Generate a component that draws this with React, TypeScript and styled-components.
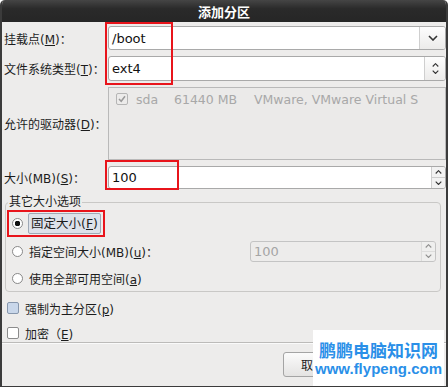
import * as React from 'react';
import styled, { createGlobalStyle } from 'styled-components';

const GlobalStyle = createGlobalStyle`
    html, body {
        margin: 0;
        padding: 0;
        background: #fff;
    }
    body {
        font-family: "DejaVu Sans", "Noto Sans CJK SC", sans-serif;
        font-size: 12px;
        color: #1c1c1c;
    }
`;

const Window = styled.div`
    position: relative;
    width: 448px;
    height: 387px;
    box-sizing: border-box;
    display: flex;
    flex-direction: column;
    background: #edeceb;
    border: 2px solid #3b3b3b;
    border-top: none;
    border-bottom-width: 1px;
    border-radius: 5px 5px 0 0;
    overflow: hidden;
`;

const TitleBar = styled.div`
    height: 22px;
    flex: none;
    display: flex;
    align-items: center;
    justify-content: center;
    background: linear-gradient(#454545, #2a2a2a 40%, #262626);
    color: #fff;
    font-weight: bold;
    font-size: 13px;
`;

const Form = styled.div`
    display: grid;
    grid-template-columns: 104px 1fr;
    grid-template-rows: 24px 25px 73px 23px;
    row-gap: 6px;
    padding: 4px 0 0 2px;
    align-items: center;
`;

const Label = styled.div`
    white-space: nowrap;
    align-self: center;
`;

const Field = styled.div<{ $disabled?: boolean }>`
    display: flex;
    align-items: stretch;
    box-sizing: border-box;
    height: 100%;
    background: ${p => (p.$disabled ? '#edeceb' : '#fff')};
    border: 1px solid ${p => (p.$disabled ? '#c4c4c4' : '#a9a9a9')};
    border-radius: 3px;
    overflow: hidden;
`;

const FieldText = styled.div<{ $disabled?: boolean }>`
    flex: 1;
    display: flex;
    align-items: center;
    padding-left: 3px;
    font-size: 13px;
    color: ${p => (p.$disabled ? '#a5a5a5' : '#111')};
`;

const ComboButton = styled.div<{ $w: number }>`
    width: ${p => p.$w}px;
    flex: none;
    display: flex;
    flex-direction: column;
    gap: 3px;
    align-items: center;
    justify-content: center;
    border-left: 1px solid #cfcfcf;
    background: linear-gradient(#fdfdfd, #ecebea);
`;

const SpinButtons = styled.div<{ $disabled?: boolean }>`
    width: 13px;
    flex: none;
    display: flex;
    flex-direction: column;
    border-left: 1px solid #cdcdcd;
    background: #f2f2f2;
    opacity: ${p => (p.$disabled ? 0.5 : 1)};
`;

const SpinHalf = styled.div`
    flex: 1;
    display: flex;
    align-items: center;
    justify-content: center;
    & + & {
        border-top: 1px solid #cdcdcd;
    }
`;

const DriveList = styled.div`
    height: 100%;
    box-sizing: border-box;
    background: #ebeae9;
    border: 1px solid #b9b9b9;
    padding: 5px 0 0 7px;
    color: #a8a8a8;
    font-size: 12.5px;
`;

const DriveRow = styled.div`
    display: flex;
    align-items: center;
    height: 12px;
`;

const DriveCell = styled.span<{ $w?: number }>`
    width: ${p => (p.$w ? `${p.$w}px` : 'auto')};
    flex: none;
    white-space: nowrap;
`;

const Check = styled.span<{ $fill?: string; $border?: string }>`
    display: inline-flex;
    align-items: center;
    justify-content: center;
    width: 10px;
    height: 10px;
    flex: none;
    border: 1px solid ${p => p.$border || '#8c8c8c'};
    border-radius: 2px;
    background: ${p => p.$fill || '#fff'};
`;

const Frame = styled.fieldset`
    margin: 6px 5px 0 3px;
    padding: 1px 4px 2px 0;
    border: 1px solid #c9c8c6;
    border-radius: 4px;
    display: flex;
    flex-direction: column;
    gap: 5px;
`;

const Legend = styled.legend`
    padding: 0 1px;
    margin-left: 2px;
    line-height: 15px;
`;

const OptionRow = styled.div<{ $h: number }>`
    height: ${p => p.$h}px;
    display: flex;
    align-items: center;
    white-space: nowrap;
`;

const Radio = styled.span<{ $on?: boolean }>`
    width: 11px;
    height: 11px;
    box-sizing: border-box;
    flex: none;
    border-radius: 50%;
    border: 1px solid #8a8a8a;
    background: radial-gradient(circle, ${p => (p.$on ? '#111 0 2.6px, #fff 3px' : '#fff 0, #fff 100%')});
    margin: 0 6px 0 6px;
`;

const FocusLabel = styled.span`
    padding: 3px 2px;
    margin-left: -1px;
    background: #dde2ea;
    border: 1px solid #9fa9b6;
    border-radius: 2px;
    line-height: 13px;
    font-size: 12.5px;
`;

const InlineSpin = styled.div`
    margin-left: auto;
    width: 186px;
    height: 21px;
`;

const CheckRow = styled.div<{ $mt: number }>`
    height: 14px;
    margin: ${p => p.$mt}px 0 0 5px;
    display: flex;
    align-items: center;
    gap: 6px;
    white-space: nowrap;
`;

const Separator = styled.div`
    height: 1px;
    margin: 2px 0 0 0;
    background: #bcbbb9;
    border-bottom: 1px solid #fafafa;
`;

const ButtonBar = styled.div`
    display: flex;
    padding: 8px 0 0 281px;
`;

const Button = styled.div`
    width: 60px;
    height: 25px;
    box-sizing: border-box;
    display: flex;
    align-items: center;
    justify-content: center;
    border: 1px solid #a4a4a4;
    border-radius: 3px;
    background: linear-gradient(#fbfbfb, #e4e3e2);
`;

const Mark = styled.div<{ $x: number; $y: number; $w: number; $h: number }>`
    position: absolute;
    left: ${p => p.$x}px;
    top: ${p => p.$y}px;
    width: ${p => p.$w}px;
    height: ${p => p.$h}px;
    box-sizing: border-box;
    border: 2px solid #e8141b;
    pointer-events: none;
`;

const Watermark = styled.div`
    position: absolute;
    left: 311px;
    top: 330px;
    width: 131px;
    height: 57px;
    background: #fff;
    display: flex;
    flex-direction: column;
    align-items: center;
    justify-content: center;
    color: #2a8fe8;
`;

const WatermarkTitle = styled.div`
    font-family: "Noto Sans CJK SC", sans-serif;
    font-size: 17px;
    font-weight: bold;
    line-height: 20px;
`;

const WatermarkUrl = styled.div`
    font-family: "Liberation Sans", sans-serif;
    font-size: 15px;
    font-weight: bold;
    line-height: 18px;
`;

const Chevron = ({ up = false, size = 7 }: { up?: boolean; size?: number }) => (
    <svg width={size} height={size * 0.6} viewBox="0 0 10 6">
        <path
            d={up ? 'M1 5 L5 1 L9 5' : 'M1 1 L5 5 L9 1'}
            fill="none"
            stroke="#333"
            strokeWidth="1.6"
        />
    </svg>
);

const Tick = () => (
    <svg width="8" height="8" viewBox="0 0 8 8">
        <path d="M1 4 L3.2 6.3 L7 1.2" fill="none" stroke="#9a9a9a" strokeWidth="1.5" />
    </svg>
);

const Spin = ({ value, disabled }: { value: string; disabled?: boolean }) => (
    <Field $disabled={disabled}>
        <FieldText $disabled={disabled}>{value}</FieldText>
        <SpinButtons $disabled={disabled}>
            <SpinHalf><Chevron up size={7} /></SpinHalf>
            <SpinHalf><Chevron size={7} /></SpinHalf>
        </SpinButtons>
    </Field>
);

const App: React.FC = () => {
    return (
        <Window>
            <GlobalStyle />
            <TitleBar>添加分区</TitleBar>
            <Form>
                <Label>挂载点(<u>M</u>)：</Label>
                <Field>
                    <FieldText>/boot</FieldText>
                    <ComboButton $w={25}><Chevron size={10} /></ComboButton>
                </Field>

                <Label>文件系统类型(<u>T</u>)：</Label>
                <Field>
                    <FieldText>ext4</FieldText>
                    <ComboButton $w={20}>
                        <Chevron up size={7} />
                        <Chevron size={7} />
                    </ComboButton>
                </Field>

                <Label>允许的驱动器(<u>D</u>)：</Label>
                <DriveList>
                    <DriveRow>
                        <Check $fill="#ecebea" $border="#b5b5b5"><Tick /></Check>
                        <DriveCell $w={8} />
                        <DriveCell $w={38}>sda</DriveCell>
                        <DriveCell $w={80}>61440 MB</DriveCell>
                        <DriveCell>VMware, VMware Virtual S</DriveCell>
                    </DriveRow>
                </DriveList>

                <Label>大小(MB)(<u>S</u>)：</Label>
                <Spin value="100" />
            </Form>

            <Frame>
                <Legend>其它大小选项</Legend>
                <OptionRow $h={24}>
                    <Radio $on />
                    <FocusLabel>固定大小(<u>F</u>)</FocusLabel>
                </OptionRow>
                <OptionRow $h={22}>
                    <Radio />
                    <span>指定空间大小(MB)(<u>u</u>)：</span>
                    <InlineSpin><Spin value="100" disabled /></InlineSpin>
                </OptionRow>
                <OptionRow $h={22}>
                    <Radio />
                    <span>使用全部可用空间(<u>a</u>)</span>
                </OptionRow>
            </Frame>

            <CheckRow $mt={9}>
                <Check $fill="#c9d7ea" $border="#8797ad" />
                <span>强制为主分区(<u>p</u>)</span>
            </CheckRow>
            <CheckRow $mt={11}>
                <Check />
                <span>加密（<u>E</u>)</span>
            </CheckRow>
            <Separator />
            <ButtonBar>
                <Button>取消</Button>
            </ButtonBar>

            <Mark $x={103} $y={22} $w={68} $h={63} />
            <Mark $x={103} $y={160} $w={74} $h={30} />
            <Mark $x={5} $y={210} $w={98} $h={27} />

            <Watermark>
                <WatermarkTitle>鹏鹏电脑知识网</WatermarkTitle>
                <WatermarkUrl>www.flypeng.com</WatermarkUrl>
            </Watermark>
        </Window>
    );
};

export default App;
